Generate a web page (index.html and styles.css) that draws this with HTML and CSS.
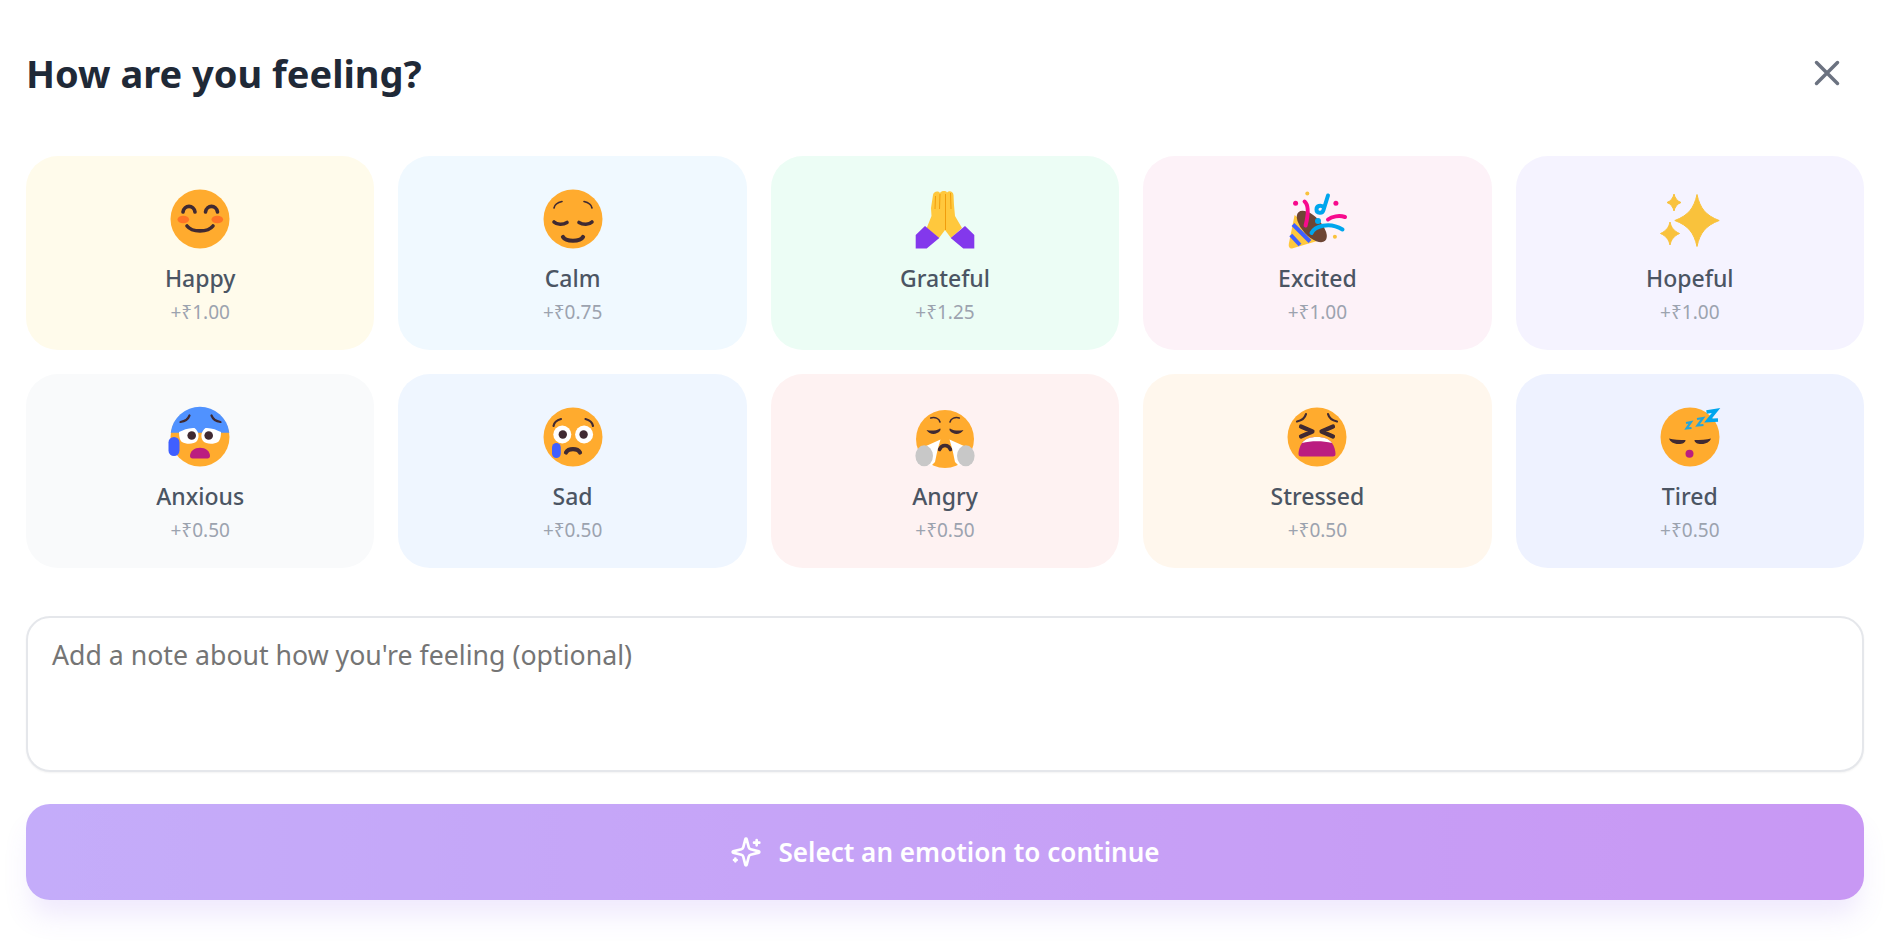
FILE: index.html
```html
<!DOCTYPE html>
<html lang="en">
<head>
<meta charset="utf-8">
<title>How are you feeling?</title>
<link rel="stylesheet" href="styles.css">
</head>
<body>
<main class="sheet">
  <header class="head">
    <h1 class="title">How are you feeling?</h1>
    <button class="close" type="button" aria-label="Close">
      <svg viewBox="0 0 24 24" class="close-icon"><path d="M18 6 6 18M6 6l12 12"/></svg>
    </button>
  </header>

  <section class="grid">
    <button class="card c-happy" type="button">
      <svg class="emoji" viewBox="0 0 64 64"><circle class="skin" cx="32" cy="32" r="29.5"/><ellipse class="cheek" cx="15.3" cy="32.5" rx="5.8" ry="3.8"/><ellipse class="cheek" cx="49.3" cy="32.5" rx="5.8" ry="3.8"/><path class="ln ln3" d="M15 25c1-7.500 11-7.500 12 0M37.500 25c1-7.500 11-7.500 12 0"/><path class="ln ln3" d="M19 39c5 6.500 21 6.500 26 0"/></svg>
      <span class="label">Happy</span><span class="price">+₹1.00</span>
    </button>
    <button class="card c-calm" type="button">
      <svg class="emoji" viewBox="0 0 64 64"><circle class="skin" cx="32" cy="32" r="29.5"/><path class="ln ln15" d="M13 21c.5-3 3.500-5.500 8-6.500M51 21c-.5-3-3.500-5.500-8-6.500"/><path class="ln ln3" d="M13 35c3 3 9 3 13 .5M38 35.500c4 2.500 10 2.500 13-.5"/><path class="ln ln4" d="M22 50c3 5 17 5 20 0"/></svg>
      <span class="label">Calm</span><span class="price">+₹0.75</span>
    </button>
    <button class="card c-grateful" type="button">
      <svg class="emoji" viewBox="0 0 64 64"><path fill="#FFC83D" d="M13.700 41 18.500 29 18 21 20 8C20.500 4.500 25 3.500 27 6 28.500 3.500 33 3.500 34 5.500 36 3.500 40 4 40.500 8L41 18 42 29 49 41 38 51 32 43 26 51z"/><path fill="none" stroke="#ED9200" stroke-width=".8" d="M32.500 7V43M27 7 26.500 22M22.500 9 22 22M37.500 6 38 22"/><path fill="#8338EC" d="M2.700 48 12 39l14.300 12-12.600 10.500h-11zM61.300 48 52 39 37.700 51l12.600 10.500h11z"/></svg>
      <span class="label">Grateful</span><span class="price">+₹1.25</span>
    </button>
    <button class="card c-excited" type="button">
      <svg class="emoji" viewBox="0 0 64 64"><path fill="#FFC83D" d="M9.600 28 3.800 57c-.6 3.500 1.500 5 4 4.200L39 52z"/><path fill="none" stroke="#3F5FFF" stroke-width="4" d="M8 37.500 25 54.500M5.800 48 15 58"/><ellipse fill="#6D4534" cx="26.800" cy="39.500" rx="9.500" ry="19.500" transform="rotate(-43 26.800 39.500)"/><circle fill="#00A6ED" cx="33" cy="34" r="3"/><circle fill="#F70A8D" cx="10.600" cy="16.200" r="2.500"/><circle fill="#F70A8D" cx="50.900" cy="16.200" r="2.500"/><circle fill="#F9C23C" cx="22.300" cy="6.500" r="2"/><circle fill="#F9C23C" cx="49.900" cy="49.800" r="2"/><path class="conf pink" d="M19.600 14.500c3.500 3 4.500 10 1 24"/><path class="conf blue" d="M43 8.500 38.500 23c-1 4-7 3.500-7-.5 0-3.500 4-5 7-2.500"/><path class="conf pink" d="M43 32.500c4-3 11-4.500 17-2.500"/><path class="conf blue" d="M26.500 46c3-6 17-12 31-3.500"/></svg>
      <span class="label">Excited</span><span class="price">+₹1.00</span>
    </button>
    <button class="card c-hopeful" type="button">
      <svg class="emoji" viewBox="0 0 64 64"><path class="star" d="M39 7.500c3 14 9 21 22.200 26-13.200 5-19.200 12-22.200 26-3-14-9-21-22.200-26 13.200-5 19.200-12 22.200-26zM16 7c1 4 3 7 7 8.500-4 1.500-6 4.500-7 8.500-1-4-3-7-7-8.500 4-1.500 6-4.500 7-8.500zM12 35c1.200 5.500 4 9 9.500 11.500C16 49 13.200 52.500 12 58c-1.200-5.500-4-9-9.500-11.500C8 44 10.800 40.500 12 35z"/></svg>
      <span class="label">Hopeful</span><span class="price">+₹1.00</span>
    </button>

    <button class="card c-anxious" type="button">
      <svg class="emoji" viewBox="0 0 64 64"><circle class="skin" cx="32" cy="32" r="29.500"/><path fill="#5092FF" d="M2.700 27.800a29.500 29.500 0 0 1 58.600 0z"/><path fill="#fff" d="M11 27c4-2 10-4.500 15.500-4 4 3 5.500 8.500 2.500 13-3 3.500-11 3.500-15 1-2.500-2-3-6.500-3-10zM53 27c-4-2-10-4.500-15.500-4-4 3-5.500 8.500-2.500 13 3 3.500 11 3.500 15 1 2.500-2 3-6.500 3-10z"/><circle class="dark" cx="23.700" cy="30.500" r="4.300"/><circle class="dark" cx="40.700" cy="30.500" r="4.300"/><path class="ln ln2" d="M12.500 17c3.500-.5 7.500-2.500 9-6.500M52.500 17c-3.500-.5-7.500-2.500-9-6.500"/><path fill="#BB1D80" d="M22 51c0-5 4.500-8.300 10-8.300S42 46 42 51c0 1.500-1 2.500-2.500 2.500h-15c-1.500 0-2.500-1-2.500-2.500z"/><rect fill="#3F5FFF" x=".5" y="32" width="11" height="19" rx="5.500"/></svg>
      <span class="label">Anxious</span><span class="price">+₹0.50</span>
    </button>
    <button class="card c-sad" type="button">
      <svg class="emoji" viewBox="0 0 64 64"><circle class="skin" cx="32" cy="32" r="29.500"/><circle fill="#fff" cx="21.300" cy="29.500" r="9"/><circle fill="#fff" cx="43.100" cy="29.500" r="9"/><circle class="dark" cx="21.800" cy="29.500" r="4.200"/><circle class="dark" cx="42.600" cy="29.500" r="4.200"/><path class="ln ln2" d="M12.500 21c.5-3 3.500-6 7.500-7M52 21c-.5-3-3.500-6-7.500-7"/><path class="ln ln4" d="M25 47.500c2.500-4.500 11.500-4.500 14 0"/><rect fill="#3F5FFF" x="11" y="38" width="8.800" height="15" rx="4.400"/></svg>
      <span class="label">Sad</span><span class="price">+₹0.50</span>
    </button>
    <button class="card c-angry" type="button">
      <svg class="emoji" viewBox="0 0 64 64"><circle class="skin" cx="32" cy="34" r="29"/><path class="ln ln15" d="M17.700 13c4-1.500 8.500.5 9.300 4M46.300 13c-4-1.500-8.500.5-9.300 4"/><path class="dark" d="M13.500 25c4 1 9.500 1 13.500-1.500 1 0 .5 1.500 0 2.500-3 3.500-10 4.500-13.500-1zM50.500 25c-4 1-9.500 1-13.500-1.500-1 0-.5 1.500 0 2.500 3 3.500 10 4.500 13.500-1z"/><path class="ln ln3" d="M26.500 44.500c1-2.500 3-4 5.500-4s4.500 1.500 5.500 4"/><path fill="#fff" d="M27.500 34.500 13 41 6 45l12 16 4-4 2.500-12zM36.500 34.500 51 41l7 4-12 16-4-4-2.500-12z"/><ellipse fill="#C8C8C8" cx="11.200" cy="50.800" rx="8.800" ry="10.500"/><ellipse fill="#C8C8C8" cx="52.800" cy="50.800" rx="8.800" ry="10.500"/></svg>
      <span class="label">Angry</span><span class="price">+₹0.50</span>
    </button>
    <button class="card c-stressed" type="button">
      <svg class="emoji" viewBox="0 0 64 64"><circle class="skin" cx="32" cy="32" r="29.500"/><path class="ln ln2" d="M12 16.500c4.500-1 8-3.500 9-7.500M52 16.500c-4.500-1-8-3.500-9-7.500"/><path class="ln ln4" d="M16 21.500 27.500 26.500 16 31.500M48 21.500 36.500 26.500 48 31.500"/><path fill="#BB1D80" d="M17 38c3-4 8-6 15-6s12 2 15 6c2.500 3.500 3.500 8 3.500 11 0 1.800-1.200 2.500-2.500 2.500H16c-1.300 0-2.500-.7-2.500-2.500 0-3 1-7.500 3.500-11z"/><path fill="#fff" d="M17 38c3-4 8-6 15-6s12 2 15 6c-9-2.500-21-2.500-30 0z"/></svg>
      <span class="label">Stressed</span><span class="price">+₹0.50</span>
    </button>
    <button class="card c-tired" type="button">
      <svg class="emoji" viewBox="0 0 64 64"><circle class="skin" cx="32" cy="32" r="29.500"/><path class="dark" d="M11 33.500c4 1 11 1.500 16.500 1.500 0 2.500-2.500 4-7 4-5 0-8.500-2.500-9.500-5.500zM53 33.500c-4 1-11 1.500-16.500 1.500 0 2.500 2.500 4 7 4 5 0 8.500-2.500 9.500-5.500z"/><circle fill="#BB1D80" cx="31.500" cy="48.800" r="4"/><path class="zz thin" d="M28 18 33 17 28.500 23.500 33.500 23"/><path class="zz thin" d="M39 14 45 13 39.500 20.500 45.500 20"/><path class="zz" d="M48.500 7 58 5.500 50 15.500 60 15"/></svg>
      <span class="label">Tired</span><span class="price">+₹0.50</span>
    </button>
  </section>

  <textarea class="note" placeholder="Add a note about how you're feeling (optional)"></textarea>

  <button class="submit" type="button" disabled>
    <svg class="spark" viewBox="0 0 24 24"><path d="M9.937 15.500A2 2 0 0 0 8.500 14.063l-6.135-1.582a.5.5 0 0 1 0-.962L8.500 9.936A2 2 0 0 0 9.937 8.500l1.582-6.135a.5.5 0 0 1 .963 0L14.063 8.500A2 2 0 0 0 15.500 9.937l6.135 1.581a.5.5 0 0 1 0 .964L15.500 14.063a2 2 0 0 0-1.437 1.437l-1.582 6.135a.5.5 0 0 1-.963 0z"/><path d="M20 3v4M22 5h-4M4 17v2M5 18H3"/></svg>
    <span>Select an emotion to continue</span>
  </button>
</main>
</body>
</html>
```

FILE: styles.css
```css
* { box-sizing: border-box; }

html, body {
  margin: 0;
  background: #fff;
  height: 100%;
}

body {
  font-family: "Noto Sans", "Open Sans", "Liberation Sans", sans-serif;
  overflow: hidden;
}

.sheet {
  padding: 34px 31px 0 26px;
  display: flex;
  flex-direction: column;
}

.head {
  display: flex;
  align-items: center;
  justify-content: space-between;
  height: 78px;
  margin-bottom: 44px;
}

.title {
  margin: 0;
  font-size: 38px;
  font-weight: 700;
  line-height: 78px;
  color: #1f2937;
}

.close {
  border: 0;
  background: none;
  padding: 0;
  margin-right: 16px;
  width: 42px;
  height: 42px;
  display: flex;
}

.close-icon {
  width: 42px;
  height: 42px;
  fill: none;
  stroke: #6b7280;
  stroke-width: 2;
  stroke-linecap: round;
}

.grid {
  display: grid;
  grid-template-columns: repeat(5, 1fr);
  gap: 24px;
}

.card {
  border: 0;
  border-radius: 32px;
  height: 194px;
  padding: 31px 0 0;
  display: flex;
  flex-direction: column;
  align-items: center;
  font-family: inherit;
}

.c-happy { background: #fffbeb; }
.c-calm { background: #f0f9ff; }
.c-grateful { background: #ecfdf5; }
.c-excited { background: #fdf2f8; }
.c-hopeful { background: #f5f3ff; }
.c-anxious { background: #f9fafb; }
.c-sad { background: #eff6ff; }
.c-angry { background: #fef2f2; }
.c-stressed { background: #fff7ed; }
.c-tired { background: #eef2ff; }

.emoji {
  width: 64px;
  height: 64px;
  display: block;
  overflow: visible;
}

.skin { fill: #ffab2e; }
.cheek { fill: #ff6723; opacity: .8; }
.dark { fill: #402a32; }
.star {
  fill: #f9c23c;
  stroke: #f9c23c;
  stroke-width: 1;
  stroke-linejoin: round;
}

.ln {
  fill: none;
  stroke: #402a32;
  stroke-linecap: round;
  stroke-linejoin: round;
}
.ln15 { stroke-width: 1.6; }
.ln2 { stroke-width: 2.2; }
.ln3 { stroke-width: 3.6; }
.ln4 { stroke-width: 4.2; }

.conf {
  fill: none;
  stroke-width: 4;
  stroke-linecap: round;
}
.pink { stroke: #f70a8d; }
.blue { stroke: #00a6ed; }

.zz {
  fill: none;
  stroke: #00a6ed;
  stroke-width: 3.6;
  stroke-linejoin: miter;
}
.zz.thin { stroke: #26a5d8; stroke-width: 2.2; }

.label {
  margin-top: 10px;
  font-size: 23px;
  font-weight: 500;
  line-height: 34px;
  color: #4b5563;
}

.price {
  margin-top: 3px;
  font-size: 19px;
  line-height: 28px;
  color: #9ca3af;
}

.note {
  display: block;
  width: 100%;
  height: 156px;
  margin-top: 48px;
  padding: 19px 24px;
  border: 2px solid #e5e7eb;
  border-radius: 24px;
  background: #fff;
  box-shadow: 0 1px 2px rgba(0, 0, 0, .05);
  font-family: inherit;
  font-size: 26.700px;
  line-height: 36px;
  resize: none;
  outline: none;
}
.note::placeholder { color: #757575; opacity: 1; }

.submit {
  margin-top: 32px;
  width: 100%;
  height: 96px;
  border: 0;
  border-radius: 24px;
  background: linear-gradient(90deg, #8b5cf6, #9333ea);
  opacity: .5;
  box-shadow: 0 20px 25px -5px rgba(139, 92, 246, .25);
  color: #fff;
  font-family: inherit;
  font-size: 26.100px;
  font-weight: 600;
  display: flex;
  align-items: center;
  justify-content: center;
  gap: 16px;
}

.spark {
  width: 32px;
  height: 32px;
  fill: none;
  stroke: #fff;
  stroke-width: 2;
  stroke-linecap: round;
  stroke-linejoin: round;
}
```
